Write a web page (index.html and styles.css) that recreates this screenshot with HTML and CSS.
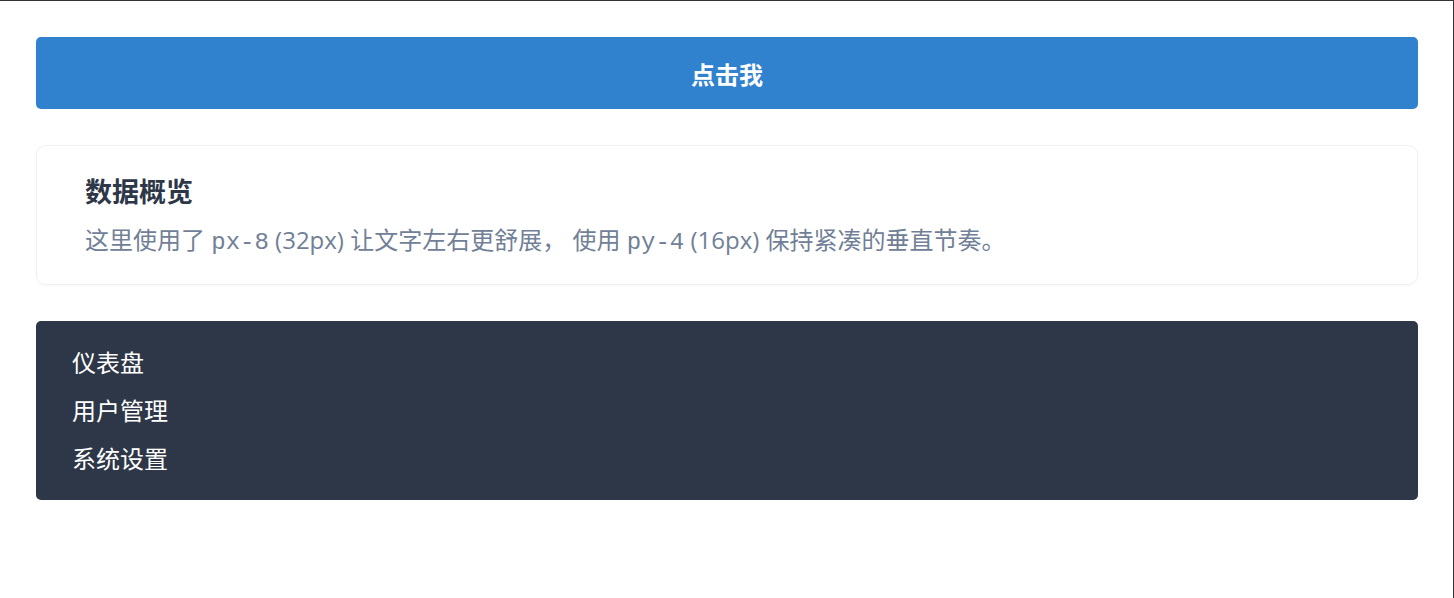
FILE: index.html
```html
<html>

<head>
    <meta http-equiv="Content-Type" content="text/html" charset="utf-8">
    <title>间距示例</title>
    <link rel="stylesheet" href="styles.css">
</head>

<body>
    <div class="page">
        <button class="btn-primary">点击我</button>

        <div class="card">
            <h2 class="card-title">数据概览</h2>
            <p class="card-text">这里使用了 <code>px-8</code> (32px) 让文字左右更舒展， 使用 <code>py-4</code> (16px) 保持紧凑的垂直节奏。</p>
        </div>

        <ul class="side-nav">
            <li>仪表盘</li>
            <li>用户管理</li>
            <li>系统设置</li>
        </ul>
    </div>
</body>

</html>
```

FILE: styles.css
```css
html,
body {
    margin: 0;
    height: 100%;
}

body {
    font-family: 'Open Sans', 'Noto Sans CJK SC', sans-serif;
    background-color: #fff;
    border-top: 1px solid #333;
    border-right: 1px solid #333;
    box-sizing: border-box;
}

.page {
    display: flex;
    flex-direction: column;
    gap: 36px;
    padding: 36px 35px 0 36px;
}

.btn-primary {
    height: 72px;
    border: 0;
    border-radius: 5px;
    background-color: #3182ce;
    color: #fff;
    font-family: inherit;
    font-size: 24px;
    font-weight: bold;
    cursor: pointer;
}

.card {
    border: 1px solid #f0f1f3;
    border-radius: 10px;
    box-shadow: 0 1px 3px rgba(0, 0, 0, 0.04);
    padding: 28px 48px 23px 48px;
}

.card-title {
    margin: 0;
    font-size: 27px;
    line-height: 36px;
    font-weight: bold;
    color: #2d3748;
}

.card-text {
    margin: 12px 0 0 0;
    font-size: 24px;
    line-height: 36px;
    color: #718096;
}

.card-text code {
    font-family: 'Liberation Mono', 'DejaVu Sans Mono', monospace;
    font-size: 1em;
}

.side-nav {
    list-style: none;
    margin: 0;
    padding: 18px 36px 17px 36px;
    background-color: #2d3748;
    border-radius: 5px;
}

.side-nav li {
    color: #fff;
    font-size: 24px;
    line-height: 48px;
}
```
